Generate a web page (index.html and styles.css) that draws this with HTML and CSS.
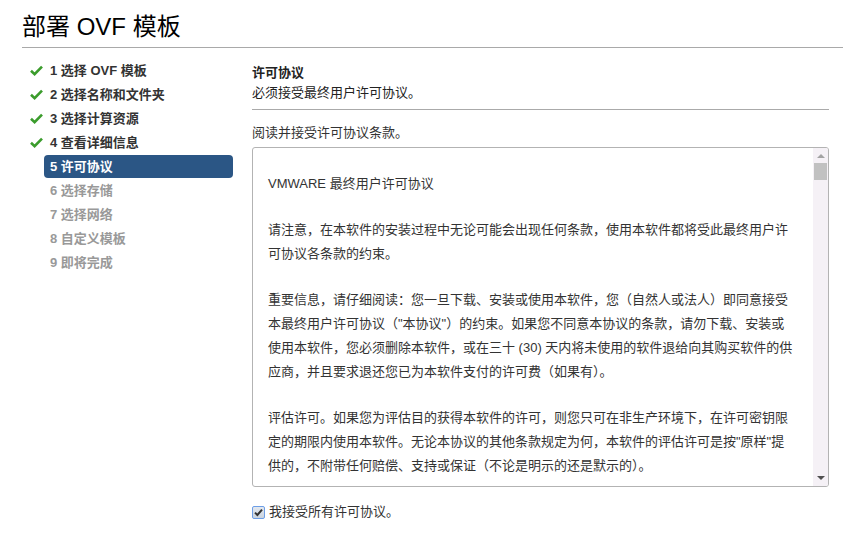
FILE: index.html
```html
<!DOCTYPE html>
<html lang="zh-CN">
<head>
<meta charset="utf-8">
<title>部署 OVF 模板</title>
<link rel="stylesheet" href="styles.css">
</head>
<body>
<div class="wizard">
  <header class="wizard-header">
    <h1 class="wizard-title">部署 OVF 模板</h1>
  </header>
  <div class="wizard-body">
    <ul class="steps">
      <li class="step done"><span class="step-icon"><svg width="13" height="11" viewBox="0 0 13 11"><path d="M1 5.8 L4.6 9.2 L12 1.6" fill="none" stroke="#3b9c2c" stroke-width="2.6"/></svg></span><span class="step-label">1 选择 OVF 模板</span></li>
      <li class="step done"><span class="step-icon"><svg width="13" height="11" viewBox="0 0 13 11"><path d="M1 5.8 L4.6 9.2 L12 1.6" fill="none" stroke="#3b9c2c" stroke-width="2.6"/></svg></span><span class="step-label">2 选择名称和文件夹</span></li>
      <li class="step done"><span class="step-icon"><svg width="13" height="11" viewBox="0 0 13 11"><path d="M1 5.8 L4.6 9.2 L12 1.6" fill="none" stroke="#3b9c2c" stroke-width="2.6"/></svg></span><span class="step-label">3 选择计算资源</span></li>
      <li class="step done"><span class="step-icon"><svg width="13" height="11" viewBox="0 0 13 11"><path d="M1 5.8 L4.6 9.2 L12 1.6" fill="none" stroke="#3b9c2c" stroke-width="2.6"/></svg></span><span class="step-label">4 查看详细信息</span></li>
      <li class="step active"><span class="step-icon"></span><span class="step-label">5 许可协议</span></li>
      <li class="step todo"><span class="step-icon"></span><span class="step-label">6 选择存储</span></li>
      <li class="step todo"><span class="step-icon"></span><span class="step-label">7 选择网络</span></li>
      <li class="step todo"><span class="step-icon"></span><span class="step-label">8 自定义模板</span></li>
      <li class="step todo"><span class="step-icon"></span><span class="step-label">9 即将完成</span></li>
    </ul>
    <main class="page">
      <div class="page-head">
        <div class="page-title">许可协议</div>
        <div class="page-desc">必须接受最终用户许可协议。</div>
      </div>
      <div class="instruction">阅读并接受许可协议条款。</div>
      <div class="eula-box">
        <div class="eula-text">
          <p>VMWARE 最终用户许可协议</p>
          <p>请注意，在本软件的安装过程中无论可能会出现任何条款，使用本软件都将受此最终用户许可协议各条款的约束。</p>
          <p>重要信息，请仔细阅读：您一旦下载、安装或使用本软件，您（自然人或法人）即同意接受本最终用户许可协议（"本协议"）的约束。如果您不同意本协议的条款，请勿下载、安装或使用本软件，您必须删除本软件，或在三十 (30) 天内将未使用的软件退给向其购买软件的供应商，并且要求退还您已为本软件支付的许可费（如果有）。</p>
          <p>评估许可。如果您为评估目的获得本软件的许可，则您只可在非生产环境下，在许可密钥限定的期限内使用本软件。无论本协议的其他条款规定为何，本软件的评估许可是按"原样"提供的，不附带任何赔偿、支持或保证（不论是明示的还是默示的）。</p>
        </div>
        <div class="scrollbar">
          <span class="arrow up"></span>
          <span class="thumb"></span>
          <span class="track"></span>
          <span class="arrow down"></span>
        </div>
      </div>
      <label class="accept">
        <span class="checkbox"><svg width="9" height="9" viewBox="0 0 9 9"><path d="M1 4.6 L3.4 7 L8 1.6" fill="none" stroke="#333" stroke-width="2"/></svg></span>
        <span>我接受所有许可协议。</span>
      </label>
    </main>
  </div>
</div>
</body>
</html>
```

FILE: styles.css
```css
* { box-sizing: border-box; }
html, body { margin: 0; padding: 0; background: #fff; }
body {
  font-family: "Liberation Sans", "Noto Sans CJK SC", sans-serif;
  font-size: 13px;
  color: #333;
}
.wizard { padding: 0 15px 0 22px; }
.wizard-header { padding-top: 12px; border-bottom: 1px solid #a9a9a9; padding-bottom: 5px; }
.wizard-title {
  margin: 0;
  font-size: 24px;
  font-weight: normal;
  line-height: 30px;
  color: #000;
}
.wizard-body { display: flex; margin-top: 10px; }
.steps {
  list-style: none;
  margin: 0;
  padding: 0;
  width: 211px;
  flex: none;
}
.step { display: flex; height: 24px; align-items: center; font-weight: bold; }
.step-icon { width: 22px; flex: none; display: flex; align-items: center; padding-left: 8px; }
.step-label {
  flex: 1;
  height: 23px;
  line-height: 23px;
  padding-left: 6px;
  border-radius: 4px;
}
.step.done .step-label { color: #333; }
.step.active .step-label { background: #2b5685; color: #fff; }
.step.todo .step-label { color: #999; }
.page { margin-left: 19px; width: 577px; }
.page-head { padding-top: 5px; padding-bottom: 6px; border-bottom: 1px solid #aaa; }
.page-title { font-weight: bold; line-height: 20px; color: #222; }
.page-desc { line-height: 20px; color: #222; }
.instruction { margin-top: 13px; line-height: 20px; color: #333; }
.eula-box {
  margin-top: 4px;
  height: 340px;
  border: 1px solid #b3b3b3;
  border-radius: 3px;
  display: flex;
  overflow: hidden;
}
.eula-text {
  flex: 1;
  padding: 24px 20px 0 15px;
  overflow: hidden;
  line-height: 24px;
  color: #333;
}
.eula-text p { margin: 0 0 22px; }
.scrollbar {
  width: 15px;
  flex: none;
  background: #f5f1f6;
  display: flex;
  flex-direction: column;
  align-items: center;
  padding: 0 0;
}
.arrow { display: block; width: 0; height: 0; border-left: 4px solid transparent; border-right: 4px solid transparent; }
.arrow.up { border-bottom: 4px solid #a3a3a3; margin-top: 6px; }
.arrow.down { border-top: 4px solid #505050; margin-bottom: 6px; }
.thumb { display: block; width: 13px; height: 17px; background: #c1c1c1; margin-top: 5px; }
.track { flex: 1; }
.accept { display: flex; align-items: center; margin-top: 15px; line-height: 20px; color: #333; }
.checkbox {
  width: 13px;
  height: 13px;
  border: 1px solid #6d9ee6;
  border-radius: 2px;
  background: linear-gradient(#e3e8ef, #c9d3df);
  display: flex;
  align-items: center;
  justify-content: center;
  margin-right: 4px;
}
```
